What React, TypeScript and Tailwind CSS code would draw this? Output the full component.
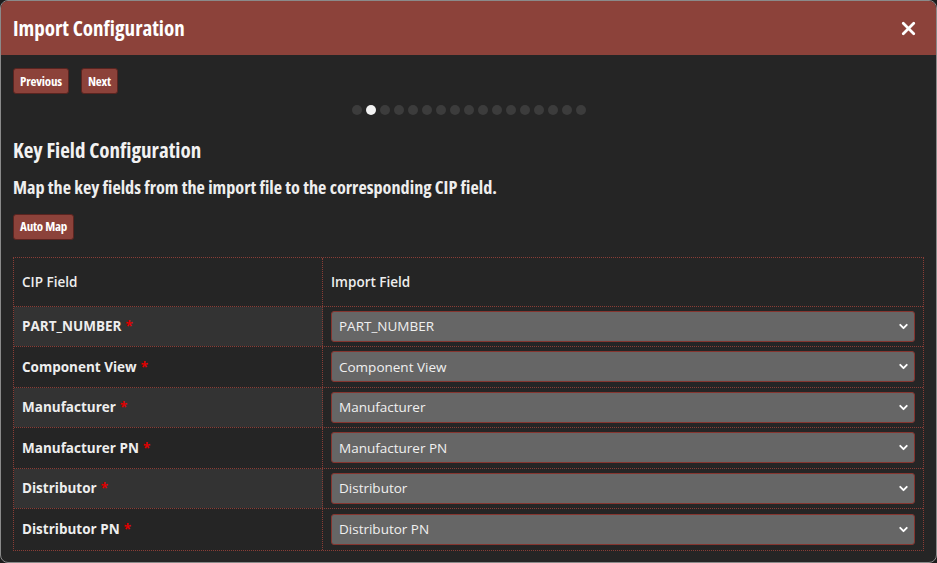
import { X, ChevronDown } from "lucide-react";

const rows = [
  "PART_NUMBER",
  "Component View",
  "Manufacturer",
  "Manufacturer PN",
  "Distributor",
  "Distributor PN",
];

const cond = "font-['Open_Sans',sans-serif] font-bold [font-stretch:75%]";

function RedButton({ label }: { label: string }) {
  return (
    <button
      className={`${cond} h-[26px] px-[6px] rounded-[3px] bg-[#8c423a] border border-[#5a2420] text-white text-[13px] leading-none tracking-[-0.2px]`}
    >
      {label}
    </button>
  );
}

export default function App() {
  return (
    <div className="w-[937px] h-[563px] bg-[#1c1c1c]">
      <div className="h-full w-full rounded-[8px] border border-[#8a8a8a] bg-[#252525] overflow-hidden flex flex-col">
        {/* Header */}
        <div className="h-[54px] shrink-0 bg-[#8c423a] flex items-center justify-between pl-[12px] pr-[17px]">
          <h1 className={`${cond} text-white text-[21px] leading-none`}>Import Configuration</h1>
          <X className="w-[21px] h-[21px] text-white" strokeWidth={3.2} />
        </div>

        <div className="flex-1 px-[12px] pt-[13px]">
          {/* Wizard nav */}
          <div className="flex gap-[12px]">
            <RedButton label="Previous" />
            <RedButton label="Next" />
          </div>

          <div className="flex justify-center gap-[4px] mt-[11px]">
            {Array.from({ length: 17 }).map((_, i) => (
              <span
                key={i}
                className={`w-[10px] h-[10px] rounded-full ${i === 1 ? "bg-[#f2f2f2]" : "bg-[#3c3c3c]"}`}
              />
            ))}
          </div>

          <h2 className={`${cond} text-[#f2f2f2] text-[21px] leading-[28px] mt-[21px]`}>Key Field Configuration</h2>
          <p className={`${cond} text-[#eeeeee] text-[18.2px] leading-[24px] mt-[11px]`}>
            Map the key fields from the import file to the corresponding CIP field.
          </p>

          <div className="mt-[14px]">
            <RedButton label="Auto Map" />
          </div>

          {/* Mapping table */}
          <div className="mt-[17px] border border-dotted border-[#8a3d36] font-['Open_Sans',sans-serif] text-[13.5px]">
            <div className="grid grid-cols-[309px_1fr] h-[49px] border-b border-dotted border-[#8a3d36]">
              <div className="flex items-center pt-[2px] px-[8px] font-semibold text-[#eeeeee] border-r border-dotted border-[#8a3d36]">
                CIP Field
              </div>
              <div className="flex items-center pt-[2px] px-[8px] font-semibold text-[#eeeeee]">Import Field</div>
            </div>
            {rows.map((r, i) => (
              <div
                key={r}
                className={`grid grid-cols-[309px_1fr] h-[40.5px] ${i < rows.length - 1 ? "border-b border-dotted border-[#8a3d36]" : ""}`}
              >
                <div
                  className={`flex items-center px-[8px] font-bold text-[#eeeeee] border-r border-dotted border-[#8a3d36] ${i % 2 === 0 ? "bg-[#333333]" : ""}`}
                >
                  {r}
                  <span className="text-[#e00000] ml-[4px]">*</span>
                </div>
                <div className="flex items-center px-[8px]">
                  <div className="flex-1 h-[31px] rounded-[3px] bg-[#666666] border border-[#85352f] flex items-center justify-between pl-[7px] pr-[4px] text-[#f0f0f0]">
                    <span>{r}</span>
                    <ChevronDown className="w-[13px] h-[13px] text-white" strokeWidth={3.5} />
                  </div>
                </div>
              </div>
            ))}
          </div>
        </div>
      </div>
    </div>
  );
}
